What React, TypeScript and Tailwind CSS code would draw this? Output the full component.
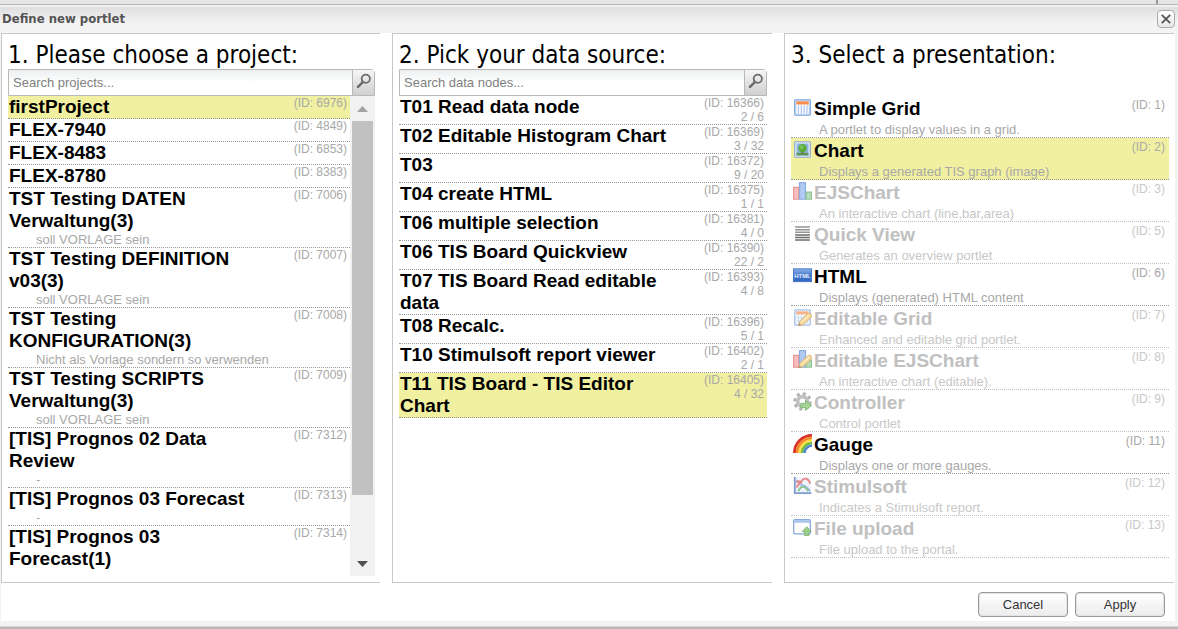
import React, { useState } from "react";
import clsx from "clsx";

interface Project {
  id: number;
  name: string;
  description?: string;
}

interface DataNode {
  id: number;
  name: string;
  usage: string;
}

interface Presentation {
  id: number;
  name: string;
  description: string;
  icon: React.ReactNode;
  disabled?: boolean;
}

const projects: Project[] = [
  { id: 6976, name: "firstProject" },
  { id: 4849, name: "FLEX-7940" },
  { id: 6853, name: "FLEX-8483" },
  { id: 8383, name: "FLEX-8780" },
  { id: 7006, name: "TST Testing DATEN Verwaltung(3)", description: "soll VORLAGE sein" },
  { id: 7007, name: "TST Testing DEFINITION v03(3)", description: "soll VORLAGE sein" },
  {
    id: 7008,
    name: "TST Testing KONFIGURATION(3)",
    description: "Nicht als Vorlage sondern so verwenden",
  },
  { id: 7009, name: "TST Testing SCRIPTS Verwaltung(3)", description: "soll VORLAGE sein" },
  { id: 7312, name: "[TIS] Prognos 02 Data Review", description: "-" },
  { id: 7313, name: "[TIS] Prognos 03 Forecast", description: "-" },
  { id: 7314, name: "[TIS] Prognos 03 Forecast(1)", description: "" },
];

const dataNodes: DataNode[] = [
  { id: 16366, name: "T01 Read data node", usage: "2 / 6" },
  { id: 16369, name: "T02 Editable Histogram Chart", usage: "3 / 32" },
  { id: 16372, name: "T03", usage: "9 / 20" },
  { id: 16375, name: "T04 create HTML", usage: "1 / 1" },
  { id: 16381, name: "T06 multiple selection", usage: "4 / 0" },
  { id: 16390, name: "T06 TIS Board Quickview", usage: "22 / 2" },
  { id: 16393, name: "T07 TIS Board Read editable data", usage: "4 / 8" },
  { id: 16396, name: "T08 Recalc.", usage: "5 / 1" },
  { id: 16402, name: "T10 Stimulsoft report viewer", usage: "2 / 1" },
  { id: 16405, name: "T11 TIS Board - TIS Editor Chart", usage: "4 / 32" },
];

const Icon = ({ children }: { children: React.ReactNode }) => (
  <svg viewBox="0 0 16 16" className="block h-[19px] w-[19px]" aria-hidden="true">
    {children}
  </svg>
);

const pencil = (
  <>
    <path d="M4.6 15 5.6 11.4 12.4 4.8Q14 3.8 15.2 5T15.2 7.8L8.4 14.2Z" fill="#f5c15c" stroke="#bd8430" strokeWidth=".7" />
    <path d="M6.8 12.4 13.6 5.9" stroke="#fde6a8" strokeWidth="1.2" />
    <path d="M4.6 15 5.2 12.9 6.9 14.5Z" fill="#6b5130" />
  </>
);

const bars = (
  <>
    <path d="M.5 4.5H5V14.5H.5Z" fill="#f09a9a" stroke="#dd5f5f" />
    <path d="M5.5 .5H10.5V14.5H5.5Z" fill="#86aeee" stroke="#4f80d0" />
    <path d="M11 8.5H15.5V14.5H11Z" fill="#8fcb94" stroke="#57a25e" />
  </>
);

const grid = (
  <>
    <rect x="1.4" y="1.4" width="13.2" height="13.2" rx=".8" fill="#c3d8f4" stroke="#7ea3d8" strokeWidth=".9" />
    <rect x="2.8" y="2.8" width="10.4" height="10.4" fill="#fff" />
    <rect x="2.8" y="2.8" width="10.4" height="2.7" fill="#f58b4c" />
    <path d="M4.6 6V13M7 6V13M9.4 6V13M11.8 6V13" stroke="#a8c4ec" strokeWidth="1" />
  </>
);

const presentations: Presentation[] = [
  {
    id: 1,
    name: "Simple Grid",
    description: "A portlet to display values in a grid.",
    icon: <Icon>{grid}</Icon>,
  },
  {
    id: 2,
    name: "Chart",
    description: "Displays a generated TIS graph (image)",
    icon: (
      <Icon>
        <rect x="1.4" y="1.4" width="13.2" height="13.2" rx=".8" fill="#dfe9f4" stroke="#8ca9cd" strokeWidth=".9" />
        <rect x="3" y="3" width="10" height="10" fill="#8fb3e2" />
        <path d="M3 10.8H13V13H3Z" fill="#5f9457" />
        <path d="M7.3 9H8.7V11.5H7.3Z" fill="#765b38" />
        <circle cx="8" cy="6.9" r="3.6" fill="#5cab41" />
        <circle cx="7.3" cy="6" r="1.6" fill="#7cc458" />
      </Icon>
    ),
  },
  {
    id: 3,
    name: "EJSChart",
    description: "An interactive chart (line,bar,area)",
    icon: <Icon>{bars}</Icon>,
    disabled: true,
  },
  {
    id: 5,
    name: "Quick View",
    description: "Generates an overview portlet",
    icon: (
      <Icon>
        <path d="M1.8 2.6H14.2M1.8 4.8H14.2M1.8 7H14.2" stroke="#5a5a5a" strokeWidth="1.2" />
        <path d="M1.8 9.2H14.2M1.8 11.4H14.2M1.8 13.4H14.2" stroke="#1e1e1e" strokeWidth="1.2" />
      </Icon>
    ),
    disabled: true,
  },
  {
    id: 6,
    name: "HTML",
    description: "Displays (generated) HTML content",
    icon: (
      <Icon>
        <defs>
          <linearGradient id="html-plate" x1="0" y1="0" x2="0" y2="1">
            <stop offset="0" stopColor="#8fb4ea" />
            <stop offset=".5" stopColor="#4579cf" />
            <stop offset="1" stopColor="#3264bd" />
          </linearGradient>
        </defs>
        <rect x=".4" y="2.4" width="15.2" height="10.8" fill="url(#html-plate)" stroke="#4377c9" strokeWidth=".8" />
        <text
          x="8"
          y="9.9"
          textAnchor="middle"
          fontFamily="Liberation Sans, sans-serif"
          fontWeight="bold"
          fontSize="5"
          fill="#e8f0fc"
        >
          HTML
        </text>
      </Icon>
    ),
  },
  {
    id: 7,
    name: "Editable Grid",
    description: "Enhanced and editable grid portlet.",
    icon: (
      <Icon>
        {grid}
        <path d="M3 8.2H13M3 10.8H13" stroke="#a8c4ec" strokeWidth=".8" />
        {pencil}
      </Icon>
    ),
    disabled: true,
  },
  {
    id: 8,
    name: "Editable EJSChart",
    description: "An interactive chart (editable).",
    icon: (
      <Icon>
        {bars}
        {pencil}
      </Icon>
    ),
    disabled: true,
  },
  {
    id: 9,
    name: "Controller",
    description: "Control portlet",
    icon: (
      <Icon>
        <circle cx="8" cy="8" r="6.4" fill="none" stroke="#8c8c8c" strokeWidth="2.8" strokeDasharray="2.6 2.42" />
        <circle cx="8" cy="8" r="4.1" fill="none" stroke="#a2a2a2" strokeWidth="3.2" />
        <path d="M6.5 9.6H10.5V7.2L15.6 11.4 10.5 15.5V13.2H6.5Z" fill="#74bd5c" stroke="#3f8f33" strokeWidth=".8" />
      </Icon>
    ),
    disabled: true,
  },
  {
    id: 11,
    name: "Gauge",
    description: "Displays one or more gauges.",
    icon: (
      <Icon>
        <g fill="none">
          <path d="M1.2 16C1.2 7.8 7.8 1.2 16 1.2" stroke="#d9322b" strokeWidth="2.4" />
          <path d="M3.5 16C3.5 9.1 9.1 3.5 16 3.5" stroke="#f48a2a" strokeWidth="2.4" />
          <path d="M5.7 16C5.7 10.3 10.3 5.7 16 5.7" stroke="#f8dc44" strokeWidth="2.2" />
          <path d="M7.8 16C7.8 11.5 11.5 7.8 16 7.8" stroke="#6cba45" strokeWidth="2.2" />
          <path d="M9.8 16C9.8 12.6 12.6 9.8 16 9.8" stroke="#4f86d6" strokeWidth="2" />
        </g>
      </Icon>
    ),
  },
  {
    id: 12,
    name: "Stimulsoft",
    description: "Indicates a Stimulsoft report.",
    icon: (
      <Icon>
        <path d="M2 1H15V14H2Z" fill="#e4ecfa" />
        <path d="M1.5 .8V14.4H15.4" fill="none" stroke="#3a68b8" strokeWidth="1.5" />
        <g fill="none" strokeWidth="1.6">
          <path d="M2.8 3.6 6.5 7 10.5 8.6 14.6 12.6" stroke="#6b95dc" />
          <path d="M4.5 12.8C5.5 10 7 9 8.5 9S11.5 10.5 13 12.8" stroke="#4fa554" />
          <path d="M2.8 9.6 6 5.6C8 2.6 10.5 1.6 12 2.6S14 4.6 14.6 6.6M2.8 5.8C4 3.6 5.5 4 7.5 6" stroke="#e04545" />
        </g>
      </Icon>
    ),
    disabled: true,
  },
  {
    id: 13,
    name: "File upload",
    description: "File upload to the portal.",
    icon: (
      <Icon>
        <rect x=".6" y="1.4" width="14" height="12" rx=".8" fill="#fff" stroke="#4b7dcd" strokeWidth="1.1" />
        <path d="M1 1.8H14.2V4H1Z" fill="#79a4e4" />
        <path d="M11.6 7.4 15.4 11.4H13.4V14.8H9.8V11.4H7.8Z" fill="#67b34f" stroke="#418f36" strokeWidth=".8" />
      </Icon>
    ),
    disabled: true,
  },
];

const Panel = ({ title, children }: { title: string; children: React.ReactNode }) => (
  <section className="flex min-h-0 min-w-0 flex-col border-y border-l border-[#c8c8c8] pr-[5px] pb-1.5 pl-1.5">
    <h2 className="h-[35px] shrink-0 pt-1.5 font-['DejaVu_Sans_Condensed','DejaVu_Sans',sans-serif] text-2xl leading-[30px] font-normal whitespace-nowrap">
      {title}
    </h2>
    {children}
  </section>
);

const SearchBox = ({ label }: { label: string }) => {
  const [query, setQuery] = useState("");

  return (
    <form
      className="flex h-[27px] shrink-0 rounded-tr-sm border border-[#b8b8b8]"
      onSubmit={(e) => e.preventDefault()}
    >
      <input
        type="text"
        aria-label={label}
        placeholder={`${label}...`}
        value={query}
        onChange={(e) => setQuery(e.target.value)}
        className="min-w-0 flex-1 bg-linear-to-b from-[#eceff0] to-white to-50% px-1 text-[13px] text-black outline-none placeholder:text-[#808080]"
      />
      <button
        type="submit"
        aria-label="Search"
        className="flex w-[22px] justify-center border-l border-[#b8b8b8] bg-linear-to-b from-[#f6f6f6] to-[#cfcfcf] pt-[3px]"
      >
        <svg viewBox="0 0 16 16" className="h-4 w-4" fill="none" aria-hidden="true">
          <circle cx="9.8" cy="5.8" r="4.1" stroke="#6a6a6a" strokeWidth="1.8" />
          <path d="M7 8.8 2 13.8" stroke="#6a6a6a" strokeWidth="2.4" strokeLinecap="round" />
        </svg>
      </button>
    </form>
  );
};

interface RowProps {
  name: string;
  meta: string[];
  description?: string;
  selected: boolean;
  onSelect: () => void;
}

const Row = ({ name, meta, description, selected, onSelect }: RowProps) => (
  <li>
    <button
      type="button"
      aria-pressed={selected}
      onClick={onSelect}
      className={clsx(
        "block w-full border-b border-dotted border-[#999] text-left",
        selected && "bg-[#f0f0a0]"
      )}
    >
      <span className="flex items-start justify-between pr-[3px]">
        <span className="w-3/4 pl-px text-[19px] leading-[22px] font-bold">{name}</span>
        <span className="text-right text-xs leading-[14px] whitespace-nowrap text-[#a8a8a8]">
          {meta.map((line) => (
            <span key={line} className="block">
              {line}
            </span>
          ))}
        </span>
      </span>
      {description !== undefined && (
        <span className="block min-h-[15px] pl-7 text-[13px] leading-[15px] text-[#a8a8a8]">
          {description}
        </span>
      )}
    </button>
  </li>
);

const ScrollBar = () => (
  <div className="flex w-[25px] shrink-0 flex-col items-center bg-[#f1f1f1]">
    <button type="button" aria-label="Scroll up" className="flex h-[25px] w-full items-center justify-center">
      <svg viewBox="0 0 11 6" className="h-1.5 w-[11px]" aria-hidden="true">
        <path d="M0 6 5.5 0 11 6Z" fill="#a3a3a3" />
      </svg>
    </button>
    <div className="flex w-full flex-1 flex-col px-0.5">
      <div className="h-[87%] bg-[#c1c1c1]" />
    </div>
    <button type="button" aria-label="Scroll down" className="flex h-[25px] w-full items-center justify-center">
      <svg viewBox="0 0 11 6" className="h-1.5 w-[11px]" aria-hidden="true">
        <path d="M0 0 5.5 6 11 0Z" fill="#505050" />
      </svg>
    </button>
  </div>
);

const DialogButton = ({ children }: { children: React.ReactNode }) => (
  <button
    type="button"
    className="h-[25px] w-[90px] rounded border border-[#999] bg-linear-to-b from-white to-[#ececec] text-[13px] leading-none text-[#333] shadow-[inset_0_0_0_1px_#e4e4e4]"
  >
    {children}
  </button>
);

const App = () => {
  const [project, setProject] = useState(6976);
  const [dataNode, setDataNode] = useState(16405);
  const [presentation, setPresentation] = useState(2);

  return (
    <div className="flex h-screen flex-col bg-[#f3f3f3] font-['Liberation_Sans',Arial,sans-serif] text-black">
      <div className="flex h-[5px] shrink-0 justify-end border-b border-[#b8b8b8] bg-[#e6e6e6] pr-5">
        <div className="w-0.5 bg-[#999]" />
      </div>
      <header className="flex h-7 shrink-0 items-center justify-between border-t-2 border-[#f0f0f0] bg-linear-to-b from-[#dedede] to-[#f3f3f3] to-60% pr-[3px] pb-0.5 pl-0.5">
        <h1 className="font-['DejaVu_Sans_Condensed','DejaVu_Sans',sans-serif] text-[13px] leading-4 font-bold text-[#555]">
          Define new portlet
        </h1>
        <button
          type="button"
          aria-label="Close"
          className="flex h-[18px] w-[18px] items-center justify-center rounded border border-[#aaa] bg-linear-to-b from-white to-[#e8e8e8]"
        >
          <svg viewBox="0 0 10 10" className="h-2.5 w-2.5" aria-hidden="true">
            <path d="M.8 .8 9.2 9.2M9.2 .8 .8 9.2" stroke="#555" strokeWidth="1.8" />
          </svg>
        </button>
      </header>

      <main className="mr-[3px] ml-px flex min-h-0 flex-1 flex-col bg-white pr-px">
        <div className="grid min-h-0 flex-1 grid-cols-[379fr_380fr_390fr] grid-rows-[minmax(0,1fr)] gap-x-3">
          <Panel title="1. Please choose a project:">
            <SearchBox label="Search projects" />
            <div className="flex min-h-0 flex-1">
              <ul className="min-w-0 flex-1 overflow-hidden">
                {projects.map((p) => (
                  <Row
                    key={p.id}
                    name={p.name}
                    meta={[`(ID: ${p.id})`]}
                    description={p.description}
                    selected={p.id === project}
                    onSelect={() => setProject(p.id)}
                  />
                ))}
              </ul>
              <ScrollBar />
            </div>
          </Panel>

          <Panel title="2. Pick your data source:">
            <SearchBox label="Search data nodes" />
            <ul className="min-h-0 flex-1 overflow-hidden">
              {dataNodes.map((n) => (
                <Row
                  key={n.id}
                  name={n.name}
                  meta={[`(ID: ${n.id})`, n.usage]}
                  selected={n.id === dataNode}
                  onSelect={() => setDataNode(n.id)}
                />
              ))}
            </ul>
          </Panel>

          <Panel title="3. Select a presentation:">
            <ul className="mt-[27px] min-h-0 flex-1 overflow-hidden">
              {presentations.map((p) => (
                <li key={p.id}>
                  <button
                    type="button"
                    disabled={p.disabled}
                    aria-pressed={p.id === presentation}
                    onClick={() => setPresentation(p.id)}
                    className={clsx(
                      "block w-full border-b border-dotted pt-0.5 text-left",
                      p.disabled ? "border-[#c0c0c0] text-[#c8c8c8]" : "border-[#999] text-[#a8a8a8]",
                      p.id === presentation && "bg-[#f0f0a0]"
                    )}
                  >
                    <span className="flex items-start pr-1 pl-0.5">
                      <span className={clsx(p.disabled && "opacity-65")}>{p.icon}</span>
                      <span
                        className={clsx(
                          "flex-1 pl-0.5 text-[19px] leading-[22px] font-bold",
                          p.disabled ? "text-[#c0c0c0]" : "text-black"
                        )}
                      >
                        {p.name}
                      </span>
                      <span className="text-xs leading-[14px]">(ID: {p.id})</span>
                    </span>
                    <span className="mt-0.5 block pl-7 text-[13px] leading-[15px]">{p.description}</span>
                  </button>
                </li>
              ))}
            </ul>
          </Panel>
        </div>

        <footer className="flex shrink-0 justify-end gap-[7px] pt-[9px] pr-[9px] pb-1">
          <DialogButton>Cancel</DialogButton>
          <DialogButton>Apply</DialogButton>
        </footer>
      </main>
      <div className="mt-[5px] h-[3px] shrink-0 border-t border-[#d8d8d8] bg-[#b8b8b8]" />
    </div>
  );
};

export default App;
